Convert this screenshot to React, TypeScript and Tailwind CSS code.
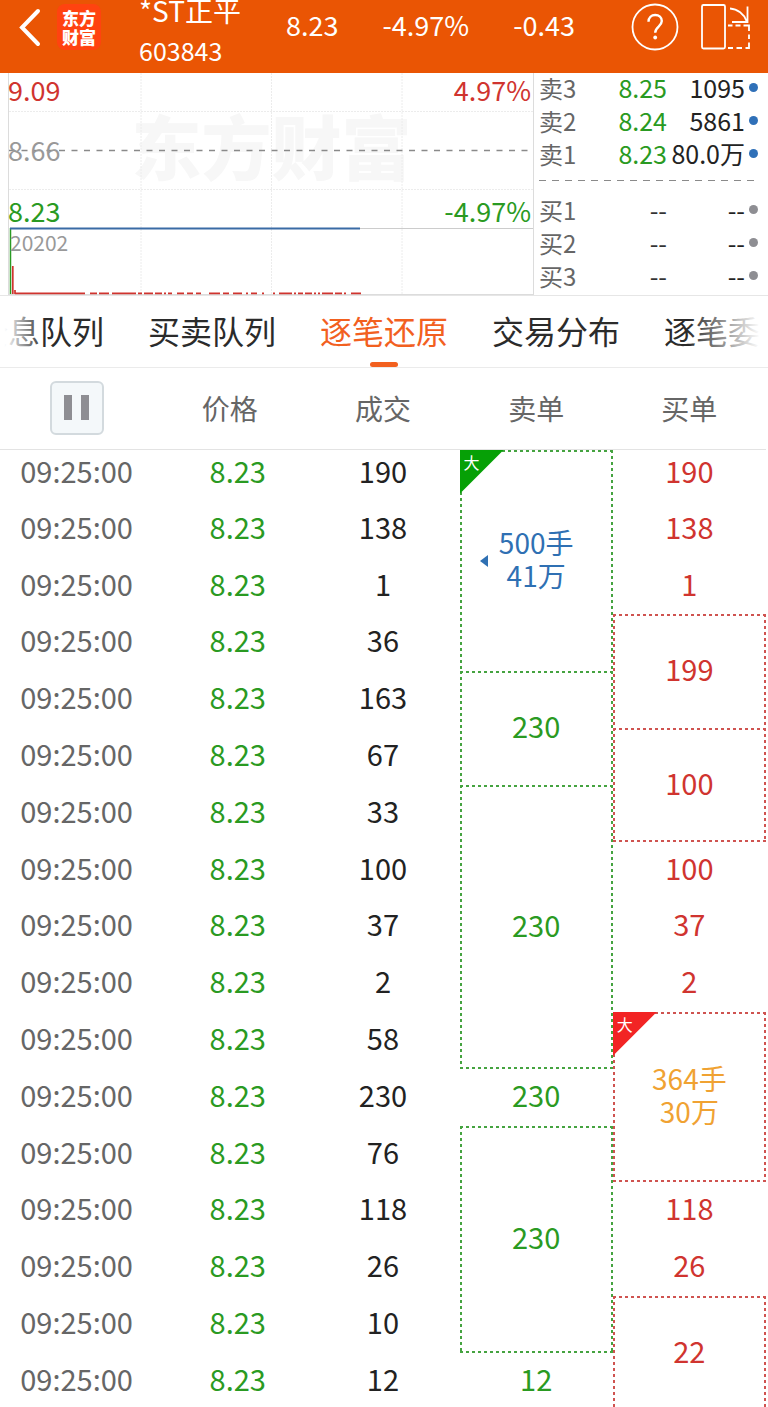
type Order = { text: string; span: number; big?: boolean; box?: boolean; open?: boolean; marker?: boolean };
type Trade = { volume: number; sell?: Order; buy?: Order };

const asks = [
  { name: '卖3', price: '8.25', size: '1095' },
  { name: '卖2', price: '8.24', size: '5861' },
  { name: '卖1', price: '8.23', size: '80.0万' },
];

const bids = [
  { name: '买1', price: '--', size: '--' },
  { name: '买2', price: '--', size: '--' },
  { name: '买3', price: '--', size: '--' },
];

const tabs = ['全息队列', '买卖队列', '逐笔还原', '交易分布', '逐笔委托'];

// an order that was filled by several trades spans their rows
const trades: Trade[] = [
  {
    volume: 190,
    sell: { text: '500手\n41万', span: 4, box: true, big: true, open: true, marker: true },
    buy: { text: '190', span: 1 },
  },
  { volume: 138, buy: { text: '138', span: 1 } },
  { volume: 1, buy: { text: '1', span: 1 } },
  { volume: 36, buy: { text: '199', span: 2, box: true, open: true } },
  { volume: 163, sell: { text: '230', span: 2, box: true, open: true } },
  { volume: 67, buy: { text: '100', span: 2, box: true } },
  { volume: 33, sell: { text: '230', span: 5, box: true } },
  { volume: 100, buy: { text: '100', span: 1 } },
  { volume: 37, buy: { text: '37', span: 1 } },
  { volume: 2, buy: { text: '2', span: 1 } },
  { volume: 58, buy: { text: '364手\n30万', span: 3, box: true, big: true } },
  { volume: 230, sell: { text: '230', span: 1 } },
  { volume: 76, sell: { text: '230', span: 4, box: true } },
  { volume: 118, buy: { text: '118', span: 1 } },
  { volume: 26, buy: { text: '26', span: 1 } },
  { volume: 10, buy: { text: '22', span: 2, box: true, open: true } },
  { volume: 12, sell: { text: '12', span: 1 } },
];

// dashed frame: top, left, right and (when the box is closed) bottom
const sellFrame =
  'bg-[repeating-linear-gradient(90deg,#45a340_0_3px,transparent_3px_6px),repeating-linear-gradient(#45a340_0_3px,transparent_3px_6px),repeating-linear-gradient(#45a340_0_3px,transparent_3px_6px),repeating-linear-gradient(90deg,#45a340_0_3px,transparent_3px_6px)]';
const buyFrame =
  'bg-[repeating-linear-gradient(90deg,#cf5350_0_3px,transparent_3px_6px),repeating-linear-gradient(#cf5350_0_3px,transparent_3px_6px),repeating-linear-gradient(#cf5350_0_3px,transparent_3px_6px),repeating-linear-gradient(90deg,#cf5350_0_3px,transparent_3px_6px)]';
const frameBase = 'bg-no-repeat bg-[position:0_0,0_0,100%_0,0_100%]';
const frameClosed = 'bg-[size:100%_2px,2px_100%,2px_100%,100%_2px]';
const frameOpen = 'bg-[size:100%_2px,2px_100%,2px_100%,0_0]';

function OrderCell({ order, side, pad }: { order: Order; side: 'sell' | 'buy'; pad: string }) {
  const sell = side === 'sell';
  let color = sell ? 'text-[#2a9a22]' : 'text-[#d0342f]';
  if (order.big) color = sell ? 'text-[#2f70b3]' : 'text-[#f0a232]';
  const frame = order.box
    ? `${frameBase} ${sell ? sellFrame : buyFrame} ${order.open ? frameOpen : frameClosed}`
    : '';

  return (
    <td rowSpan={order.span} className={`relative text-center ${frame} ${order.big ? 'pb-1' : pad}`}>
      {order.big && (
        <span
          className={`absolute left-0 top-0 size-11 pl-1 text-left text-base leading-6 text-white [clip-path:polygon(0_0,100%_0,0_100%)] ${sell ? 'bg-[#06a006]' : 'bg-[#f22424]'}`}
        >
          大
        </span>
      )}
      {order.marker && (
        <svg className="absolute left-5 top-1/2 -mt-1.5 h-3 w-2" viewBox="0 0 8 12" fill="#2f70b3">
          <path d="M8 0v12L0 6z" />
        </svg>
      )}
      <span className={`block whitespace-pre-line leading-[33px] ${order.big ? 'text-[28px]' : 'text-[29px]'} ${color}`}>
        {order.text}
      </span>
    </td>
  );
}

function QuoteRows({ rows, dot }: { rows: typeof asks; dot: string }) {
  return (
    <>
      {rows.map((row) => (
        <div key={row.name} className="flex h-[33px] items-center pb-1 text-[25px]">
          <span className="w-12 text-2xl text-[#666]">{row.name}</span>
          <span className={`w-20 text-right ${row.price === '--' ? 'text-[#333]' : 'text-[#2a9a22]'}`}>{row.price}</span>
          <span className="flex-1 text-right text-[#222]">{row.size}</span>
          <span className={`ml-1 size-[9px] rounded-full ${dot}`} />
        </div>
      ))}
    </>
  );
}

function TimeChart() {
  return (
    <div className="relative h-[222px] min-w-0 flex-1 text-[27px] leading-8">
      <span className="absolute left-4 right-2 top-6 text-center text-[70px] font-black leading-[96px] text-[#f7f7f7]">
        东方财富
      </span>
      <svg className="absolute inset-0 size-full" viewBox="0 0 535 222" preserveAspectRatio="none" fill="none">
        <path d="M141 0v221M271.500 0v221M402 0v221M9 38.500h524M9 116.500h524" stroke="#ececec" strokeDasharray="2 1" />
        <path d="M8.500 0v221.500M533.500 0v222M8 221.500h526" stroke="#dcdcdc" />
        <path d="M360 155.500h173" stroke="#ccc" />
        <path d="M9 77.500h521" stroke="#8a8a8a" strokeWidth="1.500" strokeDasharray="6 6.500" />
        <path d="M10.500 155v66" stroke="#2a9a22" strokeWidth="1.500" />
        <path d="M12.800 193v28M15 217v4" stroke="#d0342f" strokeWidth="1.700" />
        <path
          d="M15 220.300h70M90 220.300h7M99 220.300h10M112 220.300h24M138 220.300h4M144 220.300h9M155 220.300h7M164 220.300h2M168 220.300h4M177 220.300h7M187 220.300h6M196 220.300h5M209 220.300h11M223 220.300h6M233 220.300h9M246 220.300h2M251 220.300h6M262 220.300h2M273 220.300h2M279 220.300h13M294 220.300h2M298 220.300h5M305 220.300h7M314 220.300h2M318 220.300h2M322 220.300h11M335 220.300h7M344 220.300h2M351 220.300h10"
          stroke="#d0342f"
          strokeWidth="1.800"
        />
        <path d="M10 155.500h350" stroke="#3a6ba5" strokeWidth="2" />
      </svg>
      <span className="absolute left-2 top-px text-[#d0342f]">9.09</span>
      <span className="absolute right-1 top-px text-[#d0342f]">4.97%</span>
      <span className="absolute left-2 top-[61px] text-[#999]">8.66</span>
      <span className="absolute left-2 top-[122px] text-[#2a9a22]">8.23</span>
      <span className="absolute right-1 top-[122px] text-[#2a9a22]">-4.97%</span>
      <span className="absolute left-2.5 top-[153px] text-[21px] text-[#999]">20202</span>
    </div>
  );
}

export default function App() {
  return (
    <div className="flex h-screen flex-col overflow-hidden bg-white font-['Noto_Sans_CJK_SC',sans-serif]">
      <header className="flex h-[73px] shrink-0 items-center overflow-hidden bg-[#ea5504] pb-5 pl-[17px] pr-4 text-[27px] text-white">
        <button aria-label="返回" className="shrink-0">
          <svg width="24" height="40" viewBox="0 0 24 40" fill="none" stroke="#fff" strokeWidth="4" strokeLinecap="round">
            <path d="M21 4 5 20.500l16 16.500" />
          </svg>
        </button>
        <div className="ml-4 flex h-[46px] w-11 shrink-0 items-center justify-center rounded-lg bg-[#ff4310] text-center text-[17px] font-black leading-[19px]">
          东方
          <br />
          财富
        </div>
        <div className="ml-[38px] mt-1.5 w-[147px] shrink-0 leading-10">
          <h1 className="text-[28px]">*ST正平</h1>
          <p className="text-[25px]">603843</p>
        </div>
        <div className="flex flex-1 gap-[44px] pb-0.5">
          <span>8.23</span>
          <span>-4.97%</span>
          <span>-0.43</span>
        </div>
        <button aria-label="帮助">
          <svg width="48" height="48" viewBox="0 0 48 48" fill="none" stroke="#fff" strokeWidth="1.800">
            <circle cx="24" cy="24" r="22.500" />
            <path d="M17.500 18.800c0-4.300 2.900-6.800 6.700-6.800s6.600 2.500 6.600 6.100c0 5.300-6.600 5.700-6.600 11.600" strokeWidth="2.400" />
            <circle cx="24.200" cy="34.500" r="1.900" fill="#fff" stroke="none" />
          </svg>
        </button>
        <button aria-label="切换横屏" className="ml-[21px]">
          <svg width="52" height="48" viewBox="0 0 52 48" fill="none" stroke="#fff" strokeWidth="1.800">
            <rect x="2" y="2" width="23" height="43.500" rx="1.500" />
            <path d="M28 22.500h4.500M35.500 22.500h5M43.500 22.500H49V28M49 31.500v4.500M49 39.500v5.500h-3.500M42 45h-5.500M33 45h-5" />
            <path d="M30 5.500c7.500.5 14 5.500 16.500 12.500M47.500 3.500v15.500H32" />
          </svg>
        </button>
      </header>

      <section className="flex shrink-0 border-b border-[#e6e6e6]">
        <TimeChart />
        <div className="w-[233px] shrink-0 pl-1 pr-2.5">
          <QuoteRows rows={asks} dot="bg-[#2f70b8]" />
          <div className="mb-3.5 mt-2 h-px bg-[repeating-linear-gradient(90deg,#8a8a8a_0_7px,transparent_7px_13px)]" />
          <QuoteRows rows={bids} dot="bg-[#8e8e93]" />
        </div>
      </section>

      <nav className="relative flex h-[72px] shrink-0 justify-center gap-11 overflow-hidden border-b border-[#ebebeb] text-[32px]">
        {tabs.map((tab) => {
          const active = tab === '逐笔还原';
          return (
            <button
              key={tab}
              className={`relative shrink-0 whitespace-nowrap pb-1 ${active ? 'text-[#f2601f]' : 'text-[#2b2b2b]'}`}
            >
              {tab}
              {active && <span className="absolute bottom-0 left-1/2 -ml-3.5 h-[5px] w-7 rounded-full bg-[#f2601f]" />}
            </button>
          );
        })}
        <span className="absolute inset-y-0 left-0 w-11 bg-linear-to-r from-white from-10% to-transparent" />
        <span className="absolute inset-y-0 right-0 w-20 bg-linear-to-l from-white from-10% to-transparent" />
      </nav>

      <main className="min-h-0 flex-1 overflow-y-auto pr-0.5 [scrollbar-width:none]">
        <table className="w-full table-fixed border-separate border-spacing-0">
          <thead className="sticky top-0 z-10 bg-white text-[28px] text-[#666] [&_th]:border-b [&_th]:border-[#e3e3e3] [&_th]:pb-0.5 [&_th]:font-normal">
            <tr className="h-[82px]">
              <th>
                <button
                  aria-label="暂停"
                  className="mx-auto flex size-[54px] items-center justify-center gap-[9px] rounded-md border-2 border-[#d3dade] bg-[#f4f8fa]"
                >
                  <span className="h-[25px] w-2 bg-[#8e8e93]" />
                  <span className="h-[25px] w-2 bg-[#8e8e93]" />
                </button>
              </th>
              <th>价格</th>
              <th>成交</th>
              <th>卖单</th>
              <th>买单</th>
            </tr>
          </thead>
          <tbody className="text-center text-[29px] leading-[33px]">
            {trades.map((trade, i) => {
              const pad = i === 0 ? 'pb-2.5' : 'pb-1.5';
              return (
                <tr key={i} className="h-[57px] first:h-[51px] nth-[5n+3]:h-14">
                  <td className={`text-[#666] ${pad}`}>09:25:00</td>
                  <td className={`pl-4 text-[#2a9a22] ${pad}`}>8.23</td>
                  <td className={`text-[#222] ${pad}`}>{trade.volume}</td>
                  {trade.sell && <OrderCell order={trade.sell} side="sell" pad={pad} />}
                  {trade.buy && <OrderCell order={trade.buy} side="buy" pad={pad} />}
                </tr>
              );
            })}
          </tbody>
        </table>
      </main>
    </div>
  );
}
